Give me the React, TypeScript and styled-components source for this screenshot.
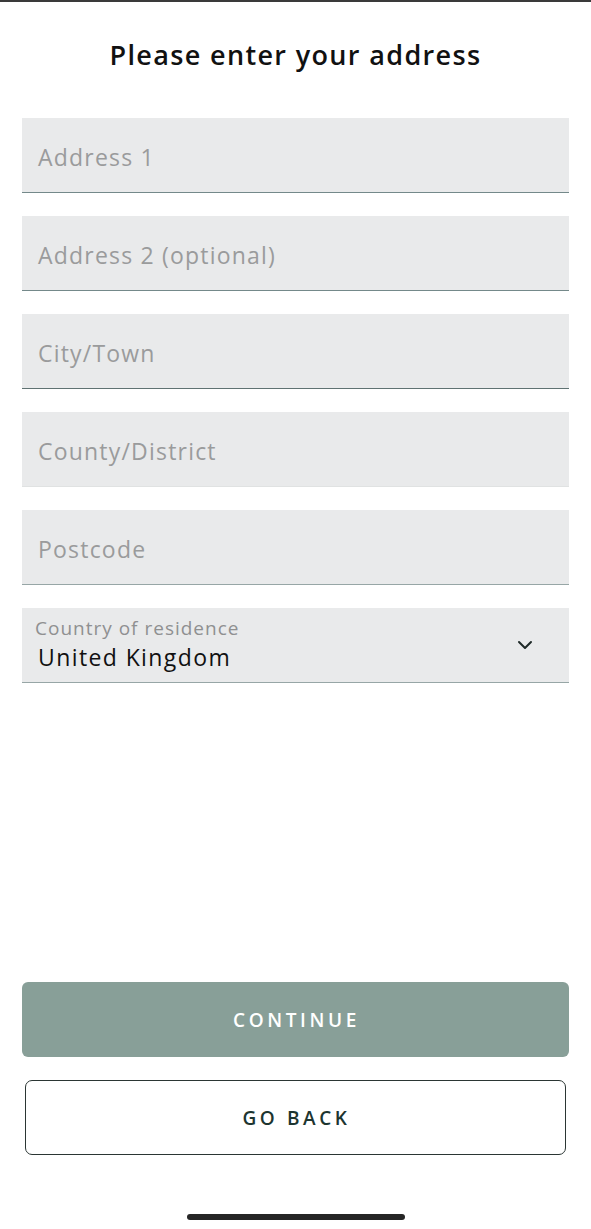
import React from "react";
import styled, { createGlobalStyle } from "styled-components";

const Global = createGlobalStyle`
  html, body { margin: 0; padding: 0; background: #ffffff; }
  body { font-family: "Open Sans", "Noto Sans", "Liberation Sans", sans-serif; }
  * { box-sizing: border-box; }
`;

const Page = styled.div`
  width: 591px;
  height: 1229px;
  display: flex;
  flex-direction: column;
  border-top: 2px solid #3a3a3a;
  background: #fff;
`;

const Title = styled.h1`
  margin: 0;
  height: 116px;
  padding-top: 35px;
  text-align: center;
  font-size: 27px;
  font-weight: 600;
  line-height: 36px;
  letter-spacing: 1.35px;
  color: #111;
`;

const Form = styled.div`
  display: flex;
  flex-direction: column;
  gap: 23px;
  padding: 0 22px;
`;

const Field = styled.div<{ $line: string }>`
  height: 75px;
  background: #e9eaeb;
  border-bottom: 1px solid ${(p) => p.$line};
  display: flex;
  align-items: center;
  padding: 3px 16px 0;
`;

const Placeholder = styled.span`
  font-size: 23px;
  color: #9a9b9c;
  letter-spacing: 1.2px;
`;

const SelectText = styled.div`
  display: flex;
  flex-direction: column;
  margin-left: -3px;
  margin-top: -5px;
`;

const SelectLabel = styled.span`
  font-size: 19px;
  line-height: 26px;
  color: #8f9091;
  letter-spacing: 1px;
`;

const SelectValue = styled.span`
  font-size: 23px;
  line-height: 32px;
  color: #111;
  margin-left: 3px;
  letter-spacing: 1.4px;
`;

const Chevron = styled.svg`
  margin-left: auto;
  margin-right: 20px;
  margin-top: -3px;
  width: 16px;
  height: 10px;
`;

const Spacer = styled.div`
  flex: 1;
`;

const Buttons = styled.div`
  display: flex;
  flex-direction: column;
  gap: 23px;
  padding: 0 22px;
`;

const PrimaryButton = styled.button`
  height: 75px;
  border: none;
  border-radius: 6px;
  background: #889f98;
  color: #fff;
  font-family: inherit;
  font-size: 19px;
  font-weight: 600;
  letter-spacing: 3.6px;
  text-indent: 2px;
`;

const SecondaryButton = styled.button`
  height: 75px;
  margin: 0 3px;
  border: 1.5px solid #2b3634;
  border-radius: 7px;
  background: #fff;
  color: #1d3530;
  font-family: inherit;
  font-size: 19px;
  font-weight: 600;
  letter-spacing: 3.6px;
  text-indent: 2px;
`;

const HomeBar = styled.div`
  width: 218px;
  height: 6px;
  border-radius: 3px;
  background: #262626;
  margin: 59px auto 9px;
`;

const fields = [
  { label: "Address 1", line: "#74898a" },
  { label: "Address 2 (optional)", line: "#74898a" },
  { label: "City/Town", line: "#5f7272" },
  { label: "County/District", line: "#e0e2e2" },
  { label: "Postcode", line: "#97a6a6" },
];

export default function App() {
  return (
    <>
      <Global />
      <Page>
        <Title>Please enter your address</Title>
        <Form>
          {fields.map((f) => (
            <Field key={f.label} $line={f.line}>
              <Placeholder>{f.label}</Placeholder>
            </Field>
          ))}
          <Field $line="#97a6a6">
            <SelectText>
              <SelectLabel>Country of residence</SelectLabel>
              <SelectValue>United Kingdom</SelectValue>
            </SelectText>
            <Chevron viewBox="0 0 16 10">
              <path d="M2 2 L8 8 L14 2" fill="none" stroke="#1f2a28" strokeWidth="2" strokeLinecap="round" strokeLinejoin="round" />
            </Chevron>
          </Field>
        </Form>
        <Spacer />
        <Buttons>
          <PrimaryButton>CONTINUE</PrimaryButton>
          <SecondaryButton>GO BACK</SecondaryButton>
        </Buttons>
        <HomeBar />
      </Page>
    </>
  );
}
